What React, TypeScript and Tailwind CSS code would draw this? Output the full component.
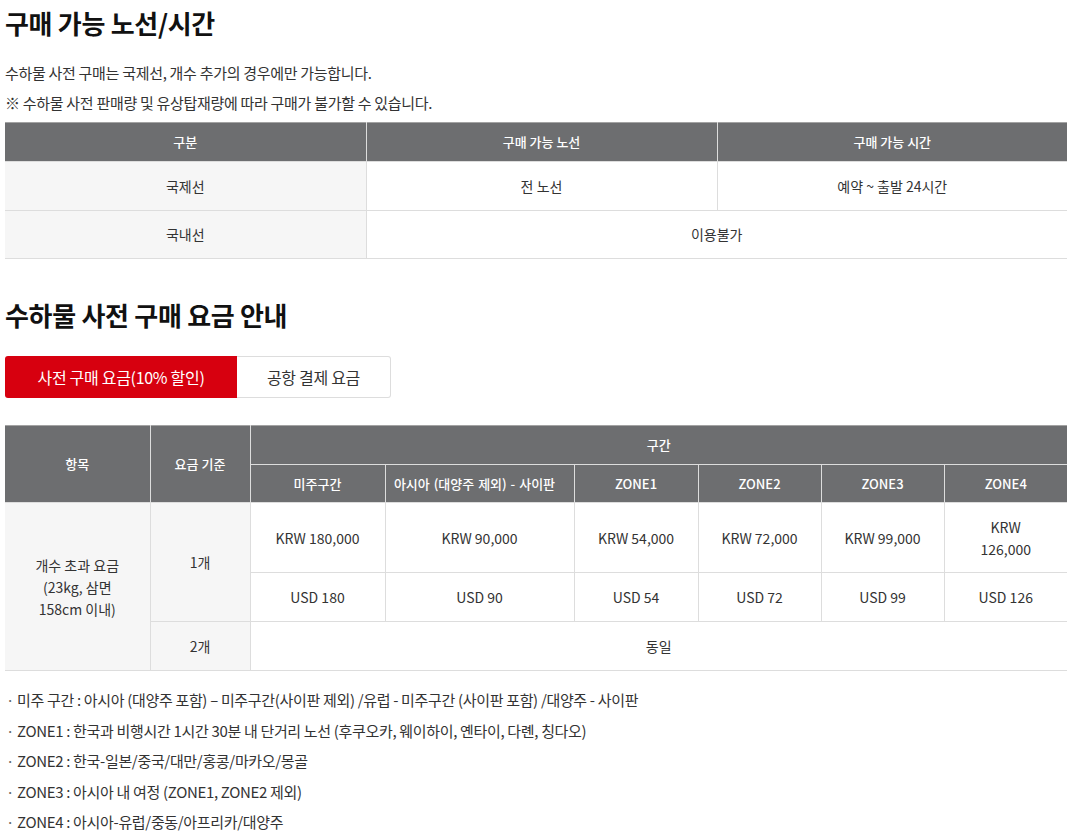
import React from "react";

const font = { fontFamily: '"Noto Sans CJK KR", "Noto Sans", sans-serif' };

const th = "border-l border-r border-[#dddddd] text-white text-[13px] font-medium text-center align-middle first:border-l-0 last:border-r-0";
const td = "border border-[#dddddd] text-[14px] text-[#333333] text-center align-middle";

export default function App() {
  const krw = ["KRW 180,000", "KRW 90,000", "KRW 54,000", "KRW 72,000", "KRW 99,000", "KRW 126,000"];
  const usd = ["USD 180", "USD 90", "USD 54", "USD 72", "USD 99", "USD 126"];
  const notes = [
    "미주 구간 : 아시아 (대양주 포함) – 미주구간(사이판 제외) /유럽 - 미주구간 (사이판 포함) /대양주 - 사이판",
    "ZONE1 : 한국과 비행시간 1시간 30분 내 단거리 노선 (후쿠오카, 웨이하이, 옌타이, 다롄, 칭다오)",
    "ZONE2 : 한국-일본/중국/대만/홍콩/마카오/몽골",
    "ZONE3 : 아시아 내 여정 (ZONE1, ZONE2 제외)",
    "ZONE4 : 아시아-유럽/중동/아프리카/대양주",
  ];
  return (
    <div style={font} className="w-[1072px] bg-white px-[5px] pt-[5px] text-[#333333]">
      <h2 className="text-[26px] font-bold text-[#111111] leading-[36px] tracking-[-0.3px]">구매 가능 노선/시간</h2>
      <p className="mt-[17px] text-[15px] leading-[30px] tracking-[-0.3px]">수하물 사전 구매는 국제선, 개수 추가의 경우에만 가능합니다.</p>
      <p className="text-[15px] leading-[30px] tracking-[-0.3px]">※ 수하물 사전 판매량 및 유상탑재량에 따라 구매가 불가할 수 있습니다.</p>

      <table className="mt-[4px] w-full table-fixed border-collapse">
        <colgroup>
          <col className="w-[361px]" />
          <col className="w-[351px]" />
          <col />
        </colgroup>
        <thead>
          <tr className="h-[39px] bg-[#6d6e70] border-t border-[#a3a3a3]">
            <th className={th}>구분</th>
            <th className={th}>구매 가능 노선</th>
            <th className={th}>구매 가능 시간</th>
          </tr>
        </thead>
        <tbody>
          <tr className="h-[49px]">
            <td className={`${td} border-l-0 bg-[#f6f6f6]`}>국제선</td>
            <td className={td}>전 노선</td>
            <td className={`${td} border-r-0`}>예약 ~ 출발 24시간</td>
          </tr>
          <tr className="h-[48px]">
            <td className={`${td} border-l-0 bg-[#f6f6f6]`}>국내선</td>
            <td className={`${td} border-r-0`} colSpan={2}>이용불가</td>
          </tr>
        </tbody>
      </table>

      <h2 className="mt-[38px] text-[26px] font-bold text-[#111111] leading-[36px] tracking-[-0.3px]">수하물 사전 구매 요금 안내</h2>

      <div className="mt-[23px] flex">
        <div className="flex h-[42px] w-[232px] items-center justify-center rounded-l-[3px] bg-[#d7000f] text-[16px] text-white tracking-[-0.3px]">사전 구매 요금(10% 할인)</div>
        <div className="flex h-[42px] w-[154px] items-center justify-center rounded-r-[3px] border border-l-0 border-[#dddddd] bg-white text-[16px] text-[#333333] tracking-[-0.3px]">공항 결제 요금</div>
      </div>

      <table className="mt-[27px] w-full table-fixed border-collapse">
        <colgroup>
          <col className="w-[145px]" />
          <col className="w-[100px]" />
          <col className="w-[135px]" />
          <col className="w-[189px]" />
          <col className="w-[124px]" />
          <col className="w-[123px]" />
          <col className="w-[123px]" />
          <col />
        </colgroup>
        <thead>
          <tr className="h-[39px] bg-[#6d6e70] border-t border-[#a3a3a3]">
            <th className={`${th} border-l-0`} rowSpan={2}>항목</th>
            <th className={th} rowSpan={2}>요금 기준</th>
            <th className={`${th} border-r-0 border-b`} colSpan={6}>구간</th>
          </tr>
          <tr className="h-[38px] bg-[#6d6e70]">
            <th className={`${th} !border-l`}>미주구간</th>
            <th className={`${th} pr-[10px] [word-spacing:1px]`}>아시아 (대양주 제외) - 사이판</th>
            <th className={th}>ZONE1</th>
            <th className={th}>ZONE2</th>
            <th className={th}>ZONE3</th>
            <th className={`${th} border-r-0`}>ZONE4</th>
          </tr>
        </thead>
        <tbody>
          <tr className="h-[70px]">
            <td className={`${td} border-l-0 bg-[#f6f6f6] leading-[22px] px-[20px]`} rowSpan={3}>개수 초과 요금<br />(23kg, 삼면<br />158cm 이내)</td>
            <td className={`${td} bg-[#f6f6f6]`} rowSpan={2}>1개</td>
            {krw.map((k, i) => (
              <td key={k} className={`${td} leading-[22px] px-[10px] ${i === 5 ? "border-r-0 px-[30px]" : ""}`}>{k}</td>
            ))}
          </tr>
          <tr className="h-[49px]">
            {usd.map((u, i) => (
              <td key={u} className={`${td} ${i === 5 ? "border-r-0" : ""}`}>{u}</td>
            ))}
          </tr>
          <tr className="h-[49px]">
            <td className={`${td} bg-[#f6f6f6]`}>2개</td>
            <td className={`${td} border-r-0`} colSpan={6}>동일</td>
          </tr>
        </tbody>
      </table>

      <ul className="mt-[14px] pb-[4px]">
        {notes.map((n) => (
          <li key={n} className="flex h-[30.5px] items-center text-[15px] text-[#333333] tracking-[-0.33px]">
            <span className="w-[12px] pl-[1px] text-[#666666]">·</span>
            <span>{n}</span>
          </li>
        ))}
      </ul>
    </div>
  );
}
